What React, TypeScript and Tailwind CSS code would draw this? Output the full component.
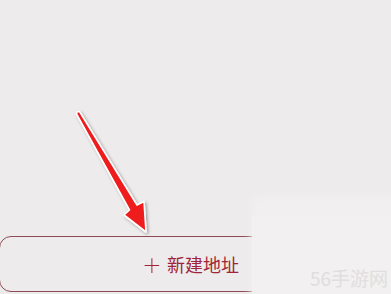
import React from "react";

export default function App() {
  return (
    <div className="relative w-[391px] h-[294px] overflow-hidden bg-[#edebeb]" style={{ fontFamily: '"Noto Sans CJK SC", "Noto Sans", sans-serif' }}>
      <div className="pt-[236px]">
        <div className="ml-[-1px] w-[420px] h-[56px] rounded-[12px] border-[1.5px] border-[#8e4a55] flex items-center pl-[143px]">
          <span className="text-[#a02539] text-[18px] leading-none flex items-center gap-[6px]">
            <span className="text-[18px] font-extralight leading-none scale-[1.1]">＋</span>
            <span>新建地址</span>
          </span>
        </div>
      </div>

      {/* lighter overlay on the right */}
      <div className="absolute left-[251px] top-[196px] w-[160px] h-[110px] bg-[#f1efef] blur-[4px]" />
      <div className="absolute left-[252px] top-[215px] w-[150px] h-[90px] bg-[#f2f0f0]" />

      {/* watermark */}
      <div className="absolute left-[310px] top-[268px] text-[19px] leading-none text-[#e0dede]" style={{ fontFamily: '"Noto Sans CJK SC", sans-serif' }}>
        56手游网
      </div>

      {/* arrow */}
      <svg className="absolute left-0 top-0" width="391" height="294" viewBox="0 0 391 294">
        <defs>
          <filter id="sh" x="-20%" y="-20%" width="140%" height="140%">
            <feDropShadow dx="1.5" dy="1.5" stdDeviation="1.5" floodColor="#000" floodOpacity="0.35" />
          </filter>
        </defs>
        <path
          d="M77 112 L79.5 111.5 L137 205 L144 201.5 L146 232 L124 215 L129.5 210 L76.5 114 Z"
          fill="#ee1a1a"
          stroke="#ffffff"
          strokeWidth="1.6"
          strokeLinejoin="round"
          filter="url(#sh)"
        />
      </svg>
    </div>
  );
}
